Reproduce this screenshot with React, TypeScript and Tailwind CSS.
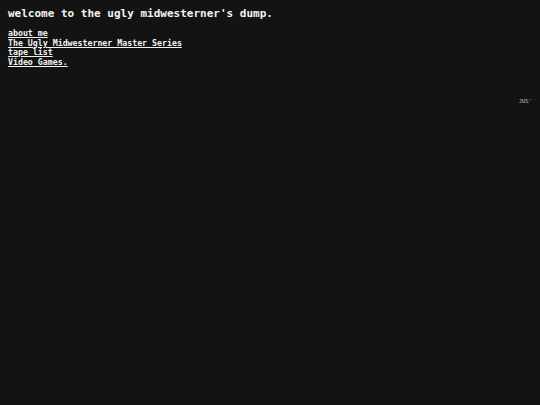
export default function App() {
  const links = ["about me", "The Ugly Midwesterner Master Series", "tape list", "Video Games."];

  return (
    <div className="min-h-screen w-full overflow-hidden bg-[#131313] text-[#f2f2f2] font-['DejaVu_Sans_Mono',monospace]">
      <div className="px-2 pt-[6px]">
        <h1 className="text-[11px] leading-[16px] font-bold">welcome to the ugly midwesterner's dump.</h1>
        <ul className="mt-[7px] text-[8.25px] leading-[9.6px] font-bold">
          {links.map((l) => (
            <li key={l}>
              <a href="#" className="underline">{l}</a>
            </li>
          ))}
        </ul>
      </div>
      <div className="flex justify-end pr-[8px] mt-[31px] overflow-hidden">
        <span className="text-[5.5px] leading-[6px] text-[#c8c8c8] whitespace-nowrap">JUS'</span>
      </div>
    </div>
  );
}
